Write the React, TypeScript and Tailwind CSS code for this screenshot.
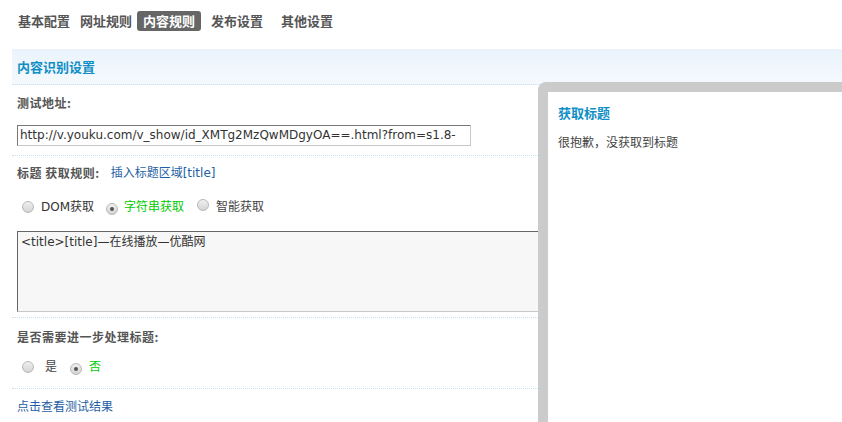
import React from "react";

const Radio = ({ checked }: { checked?: boolean }) => (
  <span className="relative inline-flex w-[12px] h-[12px] rounded-full border border-[#b8b8b8] bg-gradient-to-b from-[#f0f0f0] to-[#d4d4d4] items-center justify-center shrink-0">
    {checked && <span className="w-[4px] h-[4px] rounded-full bg-[#555]" />}
  </span>
);

export default function App() {
  return (
    <div className="relative w-[842px] h-[422px] overflow-hidden bg-white text-[12px] text-[#444] font-['DejaVu_Sans','Noto_Sans_CJK_SC',sans-serif]">
      {/* tabs */}
      <div className="flex items-center pt-[11px] pl-[18px] h-[31px] text-[13px] font-bold text-[#555] leading-[20px] font-['Noto_Sans_CJK_SC',sans-serif]">
        <span>基本配置</span>
        <span className="ml-[10px]">网址规则</span>
        <span className="ml-[5px] px-[6px] h-[20px] rounded-[3px] bg-[#666] text-white">内容规则</span>
        <span className="ml-[10px]">发布设置</span>
        <span className="ml-[18px]">其他设置</span>
      </div>

      <div className="ml-[12px] mt-[18px]">
        {/* header */}
        <div className="h-[36px] flex items-center pl-[5px] bg-gradient-to-b from-[#eaf3fc] to-[#f5f9fd] border-b border-dotted border-[#c6e0f2] text-[13px] font-bold text-[#0f8fc6] font-['Noto_Sans_CJK_SC',sans-serif]">
          内容识别设置
        </div>

        {/* row 1 */}
        <div className="pl-[5px] pt-[9px] pb-[9px] border-b border-dotted border-[#c6e0f2]">
          <div className="leading-[18px] font-bold tracking-[0.5px] text-[#555] font-['Noto_Sans_CJK_SC',sans-serif]">测试地址:</div>
          <div className="mt-[13px] w-[454px] h-[21px] border border-t-[#777] border-l-[#777] border-r-[#c8c8c8] border-b-[#c8c8c8] bg-white pl-[2px] text-[12px] leading-[19px] text-[#333] overflow-hidden whitespace-nowrap">
            http://v.youku.com/v_show/id_XMTg2MzQwMDgyOA==.html?from=s1.8-
          </div>
        </div>

        {/* row 2 */}
        <div className="pl-[5px] pt-[8px] pb-[5px] border-b border-dotted border-[#c6e0f2]">
          <div className="leading-[18px] flex items-center">
            <span className="font-bold tracking-[0.5px] text-[#555] font-['Noto_Sans_CJK_SC',sans-serif]">标题 获取规则:</span>
            <span className="ml-[11px] text-[#1f5fa6]">插入标题区域[title]</span>
          </div>
          <div className="mt-[16px] h-[18px] flex items-center pl-[5px]">
            <Radio />
            <span className="ml-[7px] text-[#333]">DOM获取</span>
            <span className="ml-[12px]"><Radio checked /></span>
            <span className="ml-[6px] text-[#00cc00]">字符串获取</span>
            <span className="ml-[13px]"><Radio /></span>
            <span className="ml-[7px] text-[#444]">智能获取</span>
          </div>
          <div className="mt-[15px] w-[620px] h-[81px] border border-t-[#666] border-l-[#666] border-r-[#c8c8c8] border-b-[#c8c8c8] bg-[#f7f7f7] pl-[3px] pt-[1px] leading-[18px] text-[#333]">
            &lt;title&gt;[title]—在线播放—优酷网
          </div>
        </div>

        {/* row 3 */}
        <div className="pl-[5px] pt-[10px] pb-[12px] border-b border-dotted border-[#c6e0f2]">
          <div className="leading-[18px] font-bold tracking-[0.5px] text-[#555] font-['Noto_Sans_CJK_SC',sans-serif]">是否需要进一步处理标题:</div>
          <div className="mt-[12px] h-[18px] flex items-center pl-[5px]">
            <Radio />
            <span className="ml-[11px] text-[#444]">是</span>
            <span className="ml-[13px]"><Radio checked /></span>
            <span className="ml-[7px] text-[#00cc00]">否</span>
          </div>
        </div>

        {/* row 4 */}
        <div className="pl-[5px] pt-[9px] leading-[18px] text-[#1f5fa6]">点击查看测试结果</div>
      </div>

      {/* popup */}
      <div className="absolute left-[538px] top-[82px] w-[330px] h-[360px] border-[10px] border-[#cbcbcb] rounded-tl-[8px] bg-white pl-[10px] pt-[12px] font-['Noto_Sans_CJK_SC',sans-serif]">
        <div className="text-[13px] font-bold leading-[18px] text-[#0f8fc6]">获取标题</div>
        <div className="mt-[11px] leading-[18px] text-[#444]">很抱歉，没获取到标题</div>
      </div>
    </div>
  );
}
